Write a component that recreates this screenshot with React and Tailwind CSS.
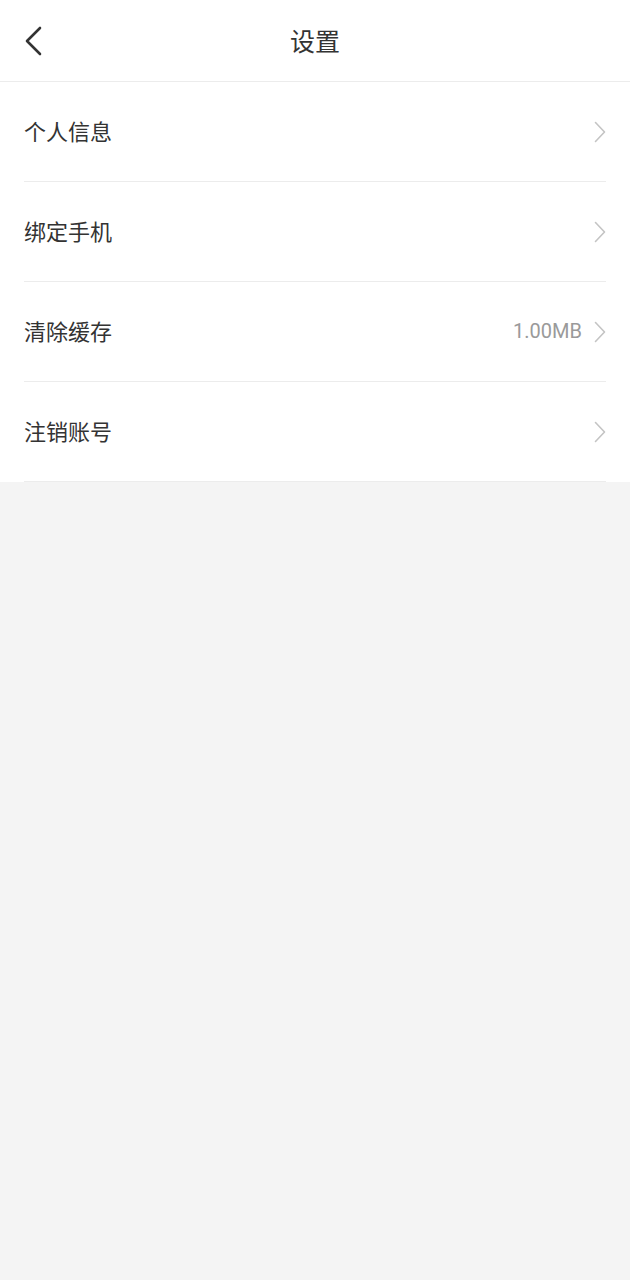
import React from 'react';

const rows = [
    { label: '个人信息' },
    { label: '绑定手机' },
    { label: '清除缓存', value: '1.00MB' },
    { label: '注销账号' },
];

function Chevron() {
    return (
        <svg width="12" height="22" viewBox="0 0 12 22" fill="none" className="shrink-0">
            <path d="M1.5 1.5 L10.5 11 L1.5 20.5" stroke="#c4c4c4" strokeWidth="1.6" strokeLinecap="round" strokeLinejoin="round" />
        </svg>
    );
}

export default function App() {
    return (
        <div className="min-h-[1280px] bg-[#f4f4f4] text-[#333]" style={{ fontFamily: '"Noto Sans CJK SC", "Noto Sans", sans-serif' }}>
            {/* Header */}
            <div className="relative h-[82px] bg-white border-b border-[#ececec] flex items-center justify-center">
                <button className="absolute left-[22px] top-[25px] w-[22px] h-[32px] flex items-center justify-center">
                    <svg width="20" height="30" viewBox="0 0 20 30" fill="none">
                        <path d="M17 2 L4 15 L17 28" stroke="#333" strokeWidth="2.6" strokeLinecap="round" strokeLinejoin="round" />
                    </svg>
                </button>
                <h1 className="text-[25px] leading-none font-normal">设置</h1>
            </div>

            {/* List */}
            <div className="bg-white">
                {rows.map((row) => (
                    <div key={row.label} className="mx-6 h-[100px] flex items-center border-b border-[#ececec]">
                        <span className="flex-1 mb-[4px] text-[22px] leading-none">{row.label}</span>
                        {row.value && (
                            <span className="mr-[12px] mb-[2px] text-[20px] leading-none text-[#9a9a9a]" style={{ fontFamily: 'Roboto, "Noto Sans", sans-serif' }}>{row.value}</span>
                        )}
                        <Chevron />
                    </div>
                ))}
            </div>
        </div>
    );
}
